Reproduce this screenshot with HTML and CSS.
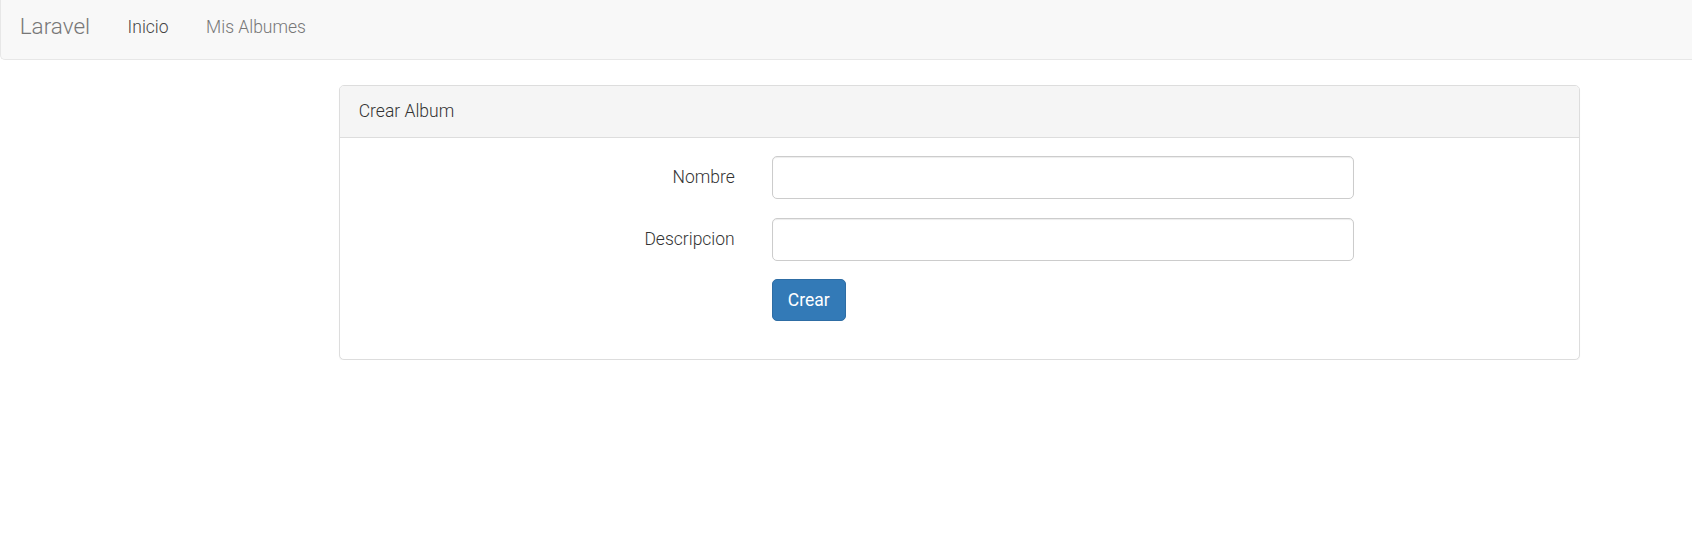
FILE: index.html
```html
<!DOCTYPE html>
<html lang="es">
<head>
<meta charset="utf-8">
<title>Laravel</title>
<link rel="stylesheet" href="styles.css">
</head>
<body>
<nav class="navbar">
  <a class="brand" href="#">Laravel</a>
  <ul class="nav">
    <li><a class="nav-link active" href="#">Inicio</a></li>
    <li><a class="nav-link" href="#">Mis Albumes</a></li>
  </ul>
</nav>
<main class="content">
  <section class="panel">
    <div class="panel-heading">Crear Album</div>
    <div class="panel-body">
      <form class="form">
        <div class="form-group">
          <label class="control-label" for="nombre">Nombre</label>
          <input class="form-control" id="nombre" type="text">
        </div>
        <div class="form-group form-group-2">
          <label class="control-label" for="descripcion">Descripcion</label>
          <input class="form-control" id="descripcion" type="text">
        </div>
        <div class="form-group form-group-last">
          <span class="control-label"></span>
          <div><button class="btn" type="button">Crear</button></div>
        </div>
      </form>
    </div>
  </section>
</main>
</body>
</html>
```
FILE: styles.css
```css
* { box-sizing: border-box; }
html, body { margin: 0; padding: 0; }
body {
  font-family: Roboto, "Liberation Sans", sans-serif;
  font-weight: 300;
  font-size: 17.5px;
  line-height: 25px;
  color: #333;
  background: #fff;
}
.navbar {
  display: flex;
  align-items: stretch;
  height: 60px;
  background: #f8f8f8;
  border: 1px solid #e7e7e7;
  border-top: 0;
  border-right: 0;
  border-radius: 0 0 0 5px;
  margin-bottom: 25px;
}
.brand {
  display: block;
  padding: 14px 18.75px 0;
  font-size: 22.5px;
  line-height: 25px;
  color: #777;
  text-decoration: none;
}
.nav {
  display: flex;
  list-style: none;
  margin: 0;
  padding: 0;
}
.nav-link {
  display: block;
  padding: 15px 18.75px 0;
  color: #777;
  text-decoration: none;
}
.nav-link.active { color: #444; }
.content {
  padding-left: 339px;
}
.panel {
  width: 1241px;
  border: 1px solid #ddd;
  border-radius: 5px;
  background: #fff;
  box-shadow: 0 1px 1px rgba(0,0,0,.05);
}
.panel-heading {
  padding: 13px 18.75px;
  background: #f5f5f5;
  border-bottom: 1px solid #ddd;
  border-radius: 4px 4px 0 0;
  color: #333;
}
.panel-body {
  padding: 18px 18.75px 19px;
}
.form-group {
  display: grid;
  grid-template-columns: 376px 582.5px;
  column-gap: 37px;
  margin-bottom: 19px;
}
.form-group-2 { margin-bottom: 18px; }
.form-group-last { margin-bottom: 19px; }
.control-label {
  text-align: right;
  padding-top: 9px;
  color: #333;
}
.form-control {
  display: block;
  width: 100%;
  height: 43px;
  padding: 7.5px 15px;
  font: inherit;
  color: #555;
  background: #fff;
  border: 1px solid #ccc;
  border-radius: 5px;
  box-shadow: inset 0 1px 1px rgba(0,0,0,.075);
}
.btn {
  display: block;
  height: 42px;
  padding: 7.5px 15px;
  font-family: inherit;
  font-size: 17.5px;
  font-weight: 400;
  line-height: 25px;
  color: #fff;
  background: #337ab7;
  border: 1px solid #2e6da4;
  border-radius: 5px;
}
```
